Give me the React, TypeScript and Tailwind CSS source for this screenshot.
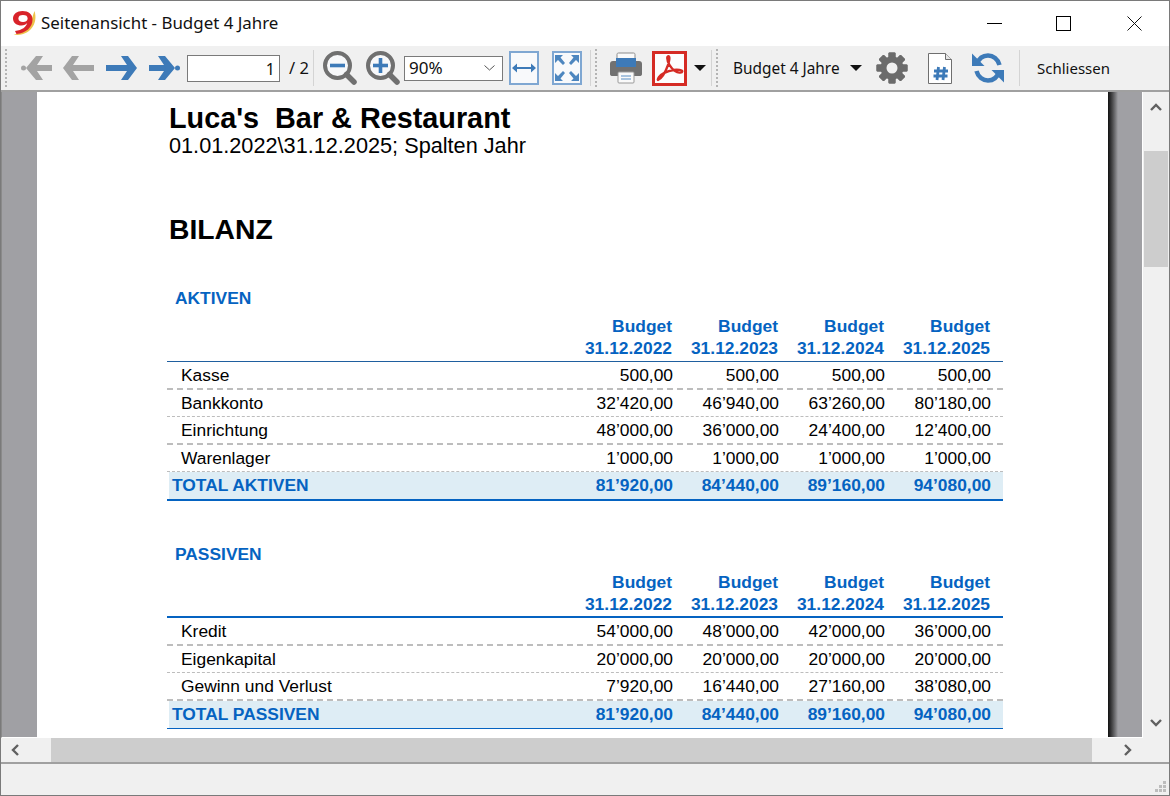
const BLUE = "#0563c1";

const years = ["31.12.2022", "31.12.2023", "31.12.2024", "31.12.2025"];

const aktiven = [
  { label: "Kasse", values: ["500,00", "500,00", "500,00", "500,00"] },
  { label: "Bankkonto", values: ["32’420,00", "46’940,00", "63’260,00", "80’180,00"] },
  { label: "Einrichtung", values: ["48’000,00", "36’000,00", "24’400,00", "12’400,00"] },
  { label: "Warenlager", values: ["1’000,00", "1’000,00", "1’000,00", "1’000,00"] },
];

const passiven = [
  { label: "Kredit", values: ["54’000,00", "48’000,00", "42’000,00", "36’000,00"] },
  { label: "Eigenkapital", values: ["20’000,00", "20’000,00", "20’000,00", "20’000,00"] },
  { label: "Gewinn und Verlust", values: ["7’920,00", "16’440,00", "27’160,00", "38’080,00"] },
];

function Grip() {
  return <div className="w-[3px] h-[38px] ml-[4px] border-l-2 border-dotted border-[#b4b4b4]" />;
}

function Sep({ className }: { className: string }) {
  return <div className={`w-px h-[36px] bg-[#d4d4d4] ${className}`} />;
}

function Arrow({ flip, dot, color, className }: { flip?: boolean; dot?: boolean; color: string; className: string }) {
  return (
    <svg width="32" height="26" viewBox="0 0 32 26" className={className} style={{ transform: flip ? "scaleX(-1)" : undefined }}>
      <path d={dot ? "M0 10H20V16H0Z" : "M0 10H24V16H0Z"} fill={color} />
      <path d={dot ? "M9 1H16L26 13L16 25H9L17 13Z" : "M15 1H22L31 13L22 25H15L23 13Z"} fill={color} />
      {dot && <circle cx="28.5" cy="13" r="2.5" fill={color} />}
    </svg>
  );
}

function Magnifier({ plus, className }: { plus?: boolean; className: string }) {
  return (
    <svg width="34" height="34" viewBox="0 0 34 34" className={className}>
      <circle cx="14.5" cy="14.5" r="12.5" fill="#f7f8fa" stroke="#707070" strokeWidth="4" />
      <path d="M23.5 23.5L31 31" stroke="#707070" strokeWidth="5.5" strokeLinecap="round" />
      <path d="M7 14.5H22" stroke="#3d7ab8" strokeWidth="3.6" />
      {plus && <path d="M14.5 7V22" stroke="#3d7ab8" strokeWidth="3.6" />}
    </svg>
  );
}

function FitWidth({ className }: { className: string }) {
  return (
    <div className={`w-[30px] h-[34px] bg-[#f8f9fb] border-2 border-[#7fa7d2] flex items-center justify-center ${className}`}>
      <svg width="26" height="12" viewBox="0 0 26 12">
        <path d="M3 6H23" stroke="#3d7ab8" strokeWidth="2" />
        <path d="M6 1.5L1 6L6 10.5ZM20 1.5L25 6L20 10.5Z" fill="#3d7ab8" />
      </svg>
    </div>
  );
}

function FitPage({ className }: { className: string }) {
  return (
    <div className={`w-[30px] h-[34px] bg-[#f8f9fb] border-2 border-[#7fa7d2] flex items-center justify-center ${className}`}>
      <svg width="26" height="28" viewBox="0 0 26 28">
        <path d="M1 1H9L6.5 3.5L11 9L9 11L4 6L1 9ZM25 1H17L19.5 3.5L15 9L17 11L22 6L25 9ZM1 27H9L6.5 24.5L11 19L9 17L4 22L1 19ZM25 27H17L19.5 24.5L15 19L17 17L22 22L25 19Z" fill="#4d86bf" />
      </svg>
    </div>
  );
}

function Printer({ className }: { className: string }) {
  return (
    <svg width="32" height="32" viewBox="0 0 32 32" className={className}>
      <path d="M7 9V2.5C7 1.5 7.5 1 8.5 1H23.5C24.5 1 25 1.5 25 2.5V9Z" fill="#fafafa" stroke="#8c8c8c" />
      <path d="M3 9H29C31 9 32 10 32 12V22C32 23.5 31 24 29.5 24H2.5C1 24 0 23.5 0 22V12C0 10 1 9 3 9Z" fill="#717171" />
      <rect x="6" y="6" width="20" height="9" fill="#3d7ab8" />
      <rect x="8" y="20" width="16" height="11" rx="1" fill="#fafafa" stroke="#9a9a9a" />
      <path d="M11 24H21M11 27H21" stroke="#8fb3d6" strokeWidth="1.5" />
    </svg>
  );
}

function PdfIcon({ className }: { className: string }) {
  return (
    <div className={`w-[35px] h-[35px] bg-[#fdfdfd] border-[3px] border-[#d52b24] flex items-center justify-center ${className}`}>
      <svg width="29" height="29" viewBox="0 0 29 29" fill="none">
        <path
          d="M3 26C7 24 10.5 18 13 11C14.3 7 14.8 4 14.2 2.8C13.6 1.8 12.2 2 12.2 4C12.2 8 16 14.5 20 17C22.5 18.5 27 19.5 27.3 17.5C27.5 16 22.5 15.3 18.5 16C13 17 7 19.5 4 23C3 24.3 2.5 26 3 26Z"
          stroke="#d52b24"
          strokeWidth="2.3"
          strokeLinejoin="round"
        />
      </svg>
    </div>
  );
}

function Caret({ className }: { className: string }) {
  return (
    <svg width="12" height="6" viewBox="0 0 12 6" className={className}>
      <path d="M0 0H12L6 6Z" fill="#111" />
    </svg>
  );
}

function Gear({ className }: { className: string }) {
  const teeth = [0, 45, 90, 135, 180, 225, 270, 315];
  return (
    <svg width="32" height="32" viewBox="0 0 32 32" className={className}>
      {teeth.map((deg) => (
        <rect key={deg} x="12.5" y="0.5" width="7" height="31" rx="1" fill="#6b6b6b" transform={`rotate(${deg} 16 16)`} />
      ))}
      <circle cx="16" cy="16" r="11.5" fill="#6b6b6b" />
      <circle cx="16" cy="16" r="5.5" fill="#f0f0f0" />
    </svg>
  );
}

function DocHash({ className }: { className: string }) {
  return (
    <svg width="24" height="31" viewBox="0 0 24 31" className={className}>
      <path d="M0.5 0.5H17.5L23.5 6.5V30.5H0.5Z" fill="#fff" stroke="#6f6f6f" />
      <path d="M17.5 0.5V6.5H23.5" fill="#e6e6e6" stroke="#6f6f6f" />
      <path d="M10.5 14L9 27M16.5 14L15 27M6 18H20M5.5 23H19.5" stroke="#3d7ab8" strokeWidth="2.8" />
    </svg>
  );
}

function Refresh({ className }: { className: string }) {
  return (
    <svg width="32" height="32" viewBox="0 0 32 32" fill="none" className={className}>
      <path d="M5 12C7 6 11 3.5 16 3.5C21 3.5 26 7 27.5 13" stroke="#3d7ab8" strokeWidth="4.5" />
      <path d="M4.5 19C6 25 11 28.5 16 28.5C21 28.5 25 26 27 20" stroke="#3d7ab8" strokeWidth="4.5" />
      <path d="M0 1.5V14H12.5Z" fill="#3d7ab8" />
      <path d="M32 30.5V18H19.5Z" fill="#3d7ab8" />
    </svg>
  );
}

function Logo() {
  return (
    <svg width="25" height="26" viewBox="0 0 25 26" className="ml-[11px]">
      <path d="M22.5 1C24.5 7 23.5 14 19 19C15 23.5 8 26 1.5 24.5C8 23.5 14 21 17 16C19.5 11.5 20.5 6 22.5 1Z" fill="#eec24a" />
      <path d="M10.5 1C5 1 1 4 1 8.5C1 13 5 15.5 9.5 15.5C12 15.5 14 14.6 15.2 13C14 17 10.5 20 3 21L4.5 24C14 23 20.5 17.5 20.5 9.5C20.5 4 16.5 1 10.5 1Z" fill="#d8232a" />
      <ellipse cx="11" cy="8.5" rx="4.6" ry="3.4" fill="#fff" />
    </svg>
  );
}

function WindowControls() {
  return (
    <div className="ml-auto flex items-center mr-[27px]">
      <div className="w-[15px] h-px bg-black" />
      <div className="w-[15px] h-[15px] border border-black ml-[54px]" />
      <svg width="15" height="15" viewBox="0 0 15 15" className="ml-[56px]">
        <path d="M0.5 0.5L14.5 14.5M14.5 0.5L0.5 14.5" stroke="#111" strokeWidth="1" />
      </svg>
    </div>
  );
}

function Toolbar() {
  return (
    <div className="h-[46px] bg-[#f0f0f0] border-b-2 border-[#a0a0a0] flex items-center shrink-0 font-['Noto_Sans',sans-serif] text-[15.4px] text-[#111]">
      <Grip />
      <Arrow flip dot color="#a3a3a3" className="ml-[12px]" />
      <Arrow flip color="#a3a3a3" className="ml-[10px]" />
      <Arrow color="#3d7ab8" className="ml-[12px]" />
      <Arrow dot color="#3d7ab8" className="ml-[11px]" />
      <div className="w-[93px] h-[27px] ml-[6px] bg-white border border-[#7a7a7a] text-right pr-[4px] leading-[26px] text-[16px]">1</div>
      <span className="ml-[9px] w-[20px] text-[16.5px]">/ 2</span>
      <Sep className="ml-[4px]" />
      <Magnifier className="ml-[9px]" />
      <Magnifier plus className="ml-[9px]" />
      <div className="w-[99px] h-[25px] ml-[4px] bg-white border border-[#7a7a7a] flex items-center justify-between pl-[4px] pr-[7px] text-[17px]">
        <span>90%</span>
        <svg width="11" height="6" viewBox="0 0 11 6" fill="none">
          <path d="M0.5 0.5L5.5 5L10.5 0.5" stroke="#555" />
        </svg>
      </div>
      <FitWidth className="ml-[6px]" />
      <FitPage className="ml-[13px]" />
      <Sep className="ml-[8px]" />
      <Grip />
      <Printer className="ml-[12px]" />
      <PdfIcon className="ml-[10px]" />
      <Caret className="ml-[7px]" />
      <Sep className="ml-[5px]" />
      <Grip />
      <span className="ml-[14px] w-[107px] pt-px whitespace-nowrap">Budget 4 Jahre</span>
      <Caret className="ml-[10px]" />
      <Gear className="ml-[14px]" />
      <DocHash className="ml-[20px]" />
      <Refresh className="ml-[20px]" />
      <Sep className="ml-[15px]" />
      <span className="ml-[17px] pt-px text-[15px]">Schliessen</span>
    </div>
  );
}

function Row({ label, values, even }: { label: string; values: string[]; even: boolean }) {
  return (
    <div className={`flex items-center pr-[12px] text-[17.4px] text-black pl-[14px] border-dashed border-[#bdbdbd] ${even ? "h-[28px] border-b-2" : "h-[27px] border-b"}`}>
      <div className="flex-1">{label}</div>
      {values.map((v, i) => (
        <div key={i} className="w-[106px] text-right">{v}</div>
      ))}
    </div>
  );
}

function Section({ title, rows, total, totals, variant }: { title: string; rows: typeof aktiven; total: string; totals: string[]; variant: "aktiven" | "passiven" }) {
  const isAktiven = variant === "aktiven";
  return (
    <div className="w-[836px]">
      <div className="h-[20px] pl-[8px] font-bold text-[17.4px] leading-[20px]" style={{ color: BLUE }}>{title}</div>
      <div className="mt-[7px]">
        <div className={`flex pr-[13px] justify-end box-content text-[#0563c1] font-bold text-[17.4px] leading-[22px] ${isAktiven ? "h-[46px] border-b border-[#1f5f9f]" : "h-[45px] border-b-2 border-[#0563c1]"}`}>
          {years.map((y) => (
            <div key={y} className="w-[106px] text-right">
              <div>Budget</div>
              <div>{y}</div>
            </div>
          ))}
        </div>
      </div>
      {rows.map((r, i) => (
        <Row key={r.label} label={r.label} values={r.values} even={i % 2 === 0} />
      ))}
      <div className={`border-[#0563c1] ${isAktiven ? "border-b-2" : "border-b"}`}>
        <div className="flex h-[27px] items-center ml-[2px] pl-[3px] pr-[12px] pb-px bg-[#deedf5] font-bold text-[17.4px] text-[#0563c1]">
          <div className="flex-1">{total}</div>
          {totals.map((v, i) => (
            <div key={i} className="w-[106px] text-right">{v}</div>
          ))}
        </div>
      </div>
    </div>
  );
}

function ScrollArrow({ d, className }: { d: string; className: string }) {
  return (
    <svg width="12" height="12" viewBox="0 0 12 12" fill="none" className={className}>
      <path d={d} stroke="#606060" strokeWidth="2.4" />
    </svg>
  );
}

export default function App() {
  return (
    <div className="w-[1170px] h-[796px] flex flex-col bg-white border border-[#7a7a7a] overflow-hidden box-border">
      {/* Title bar */}
      <div className="h-[45px] shrink-0 flex items-center bg-white font-['Noto_Sans',sans-serif] text-[16.9px] text-[#111] pb-[1px]">
        <Logo />
        <span className="ml-[4px] whitespace-nowrap">Seitenansicht - Budget 4 Jahre</span>
        <WindowControls />
      </div>

      <Toolbar />

      {/* Preview area */}
      <div className="h-[646px] shrink-0 flex">
        <div className="flex-1 flex bg-[#a0a0a4] border-l border-[#8a8a8a] overflow-hidden pl-[35px] border-b border-b-white border-r border-r-white">
          <div className="w-[1071px] shrink-0 bg-white pl-[130px] pt-[10px] font-['Liberation_Sans',Arial,sans-serif] text-black">
            <div className="text-[28.8px] font-bold leading-[32px] pl-[2px] whitespace-pre">Luca's  Bar &amp; Restaurant</div>
            <div className="text-[21.7px] leading-[24px] pl-[2px]">01.01.2022\31.12.2025; Spalten Jahr</div>
            <div className="text-[28.3px] font-bold leading-[32px] pl-[2px] mt-[55px]">BILANZ</div>
            <div className="mt-[43px]">
              <Section
                title="AKTIVEN"
                rows={aktiven}
                total="TOTAL AKTIVEN"
                totals={["81’920,00", "84’440,00", "89’160,00", "94’080,00"]}
                variant="aktiven"
              />
            </div>
            <div className="mt-[43px]">
              <Section
                title="PASSIVEN"
                rows={passiven}
                total="TOTAL PASSIVEN"
                totals={["81’920,00", "84’440,00", "89’160,00", "94’080,00"]}
                variant="passiven"
              />
            </div>
          </div>
          <div className="w-[10px] shrink-0 bg-gradient-to-r from-[#111] to-[#a0a0a4]" />
        </div>
        {/* Vertical scrollbar */}
        <div className="w-[26px] shrink-0 bg-[#f0f0f0] flex flex-col items-center pt-[9px] pb-[9px]">
          <ScrollArrow d="M1 9L6 4L11 9" className="shrink-0" />
          <div className="w-[24px] h-[116px] bg-[#cdcdcd] mt-[38px]" />
          <ScrollArrow d="M1 3L6 8L11 3" className="mt-auto" />
        </div>
      </div>

      {/* Horizontal scrollbar */}
      <div className="h-[24px] shrink-0 bg-[#f0f0f0] flex items-center">
        <ScrollArrow d="M9 1L4 6L9 11" className="ml-[8px]" />
        <div className="w-[1041px] h-[24px] bg-[#cdcdcd] ml-[30px]" />
        <ScrollArrow d="M3 1L8 6L3 11" className="ml-[30px]" />
      </div>

      {/* Status bar */}
      <div className="flex-1 bg-[#f0f0f0] border-t-2 border-[#a0a0a0] relative">
        <svg width="12" height="12" viewBox="0 0 12 12" className="absolute right-[2px] bottom-[2px]">
          <path d="M8 0H11V3H8ZM4 4H7V7H4ZM8 4H11V7H8ZM0 8H3V11H0ZM4 8H7V11H4ZM8 8H11V11H8Z" fill="#bdbdbd" />
        </svg>
      </div>
    </div>
  );
}
